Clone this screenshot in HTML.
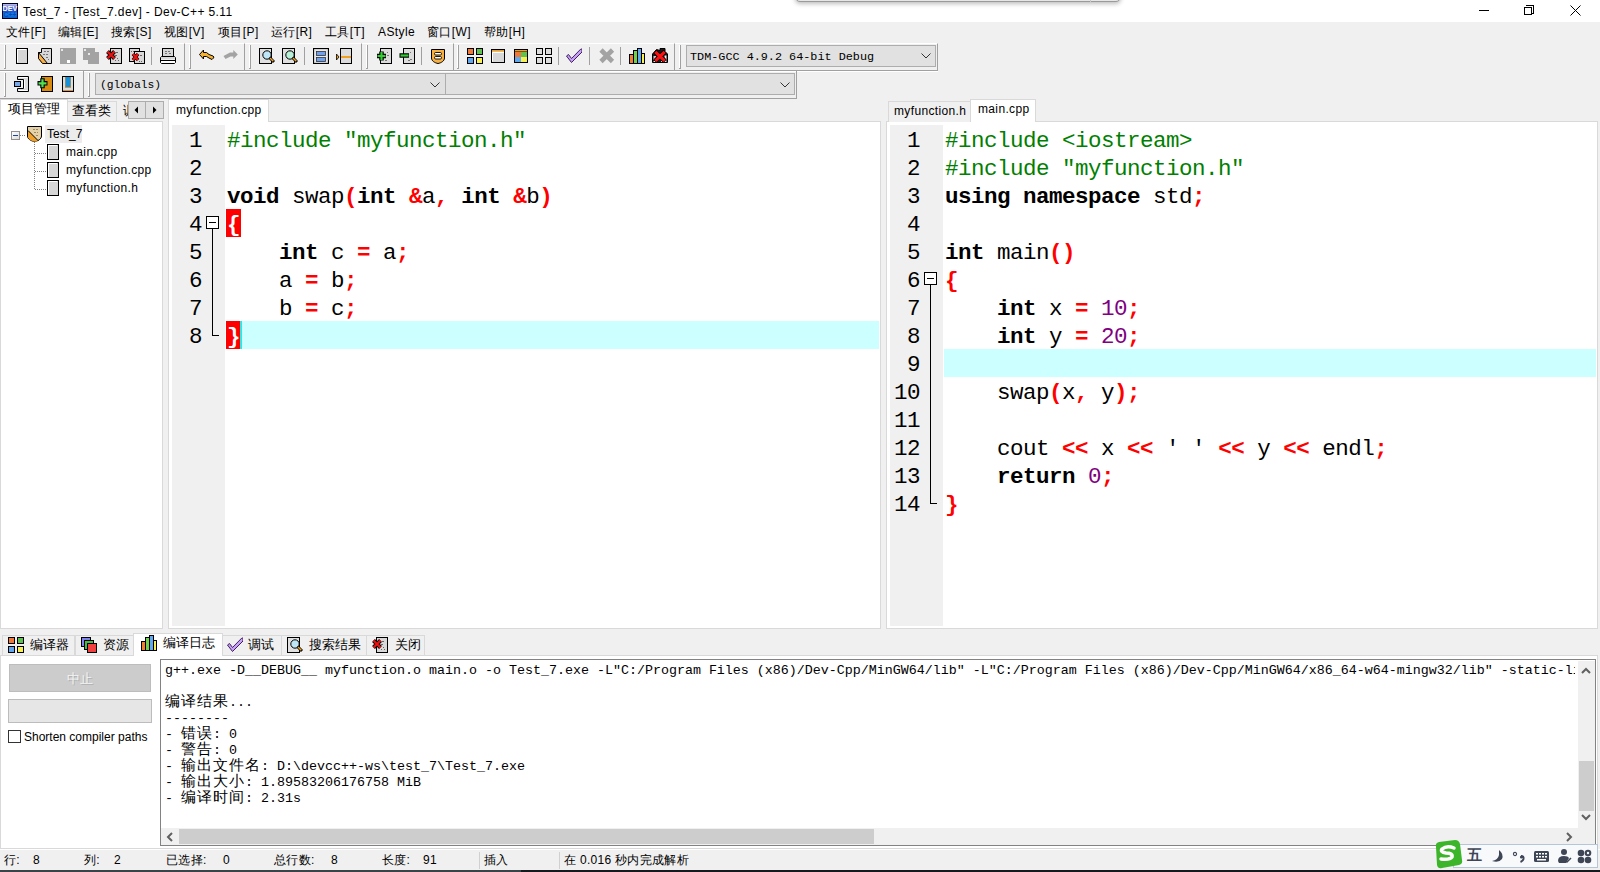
<!DOCTYPE html>
<html><head><meta charset="utf-8">
<style>
*{box-sizing:border-box}
html,body{margin:0;padding:0}
body{width:1600px;height:872px;position:relative;overflow:hidden;background:#f0f0f0;font-family:"Liberation Sans",sans-serif;font-size:12px;color:#000}
.a{position:absolute}
.t{position:absolute;white-space:pre;line-height:14px}
.code{position:absolute;font-family:"Liberation Mono",monospace;font-size:22.5px;letter-spacing:-0.5px;white-space:pre;line-height:28px}
.k{font-weight:bold}
.s{color:#ff0000;font-weight:bold}
.p{color:#008000}
.n{color:#800080}
.ln{position:absolute;font-family:"Liberation Mono",monospace;font-size:22.5px;letter-spacing:-0.5px;white-space:pre;line-height:28px;text-align:right}
.tb{position:absolute;top:43px;height:28px;border-top:1px solid #fff;border-bottom:1px solid #a0a0a0;border-right:1px solid #a0a0a0}
.hd{position:absolute;width:3px;border-left:1px solid #a0a0a0;border-right:1px solid #fff}
.sep{position:absolute;width:2px;height:18px;top:47px;border-left:1px solid #a0a0a0;border-right:1px solid #fff}
.ic{position:absolute;width:16px;height:16px}
.mono{font-family:"Liberation Mono",monospace}
.cj{letter-spacing:1px;font-size:15px}
</style></head><body>

<!-- title bar -->
<div class="a" style="left:0;top:0;width:1600px;height:22px;background:#fff"></div>
<div class="a" style="left:795px;top:-23px;width:326px;height:25px;background:#e6e6e6;border:1px solid #9a9a9a;border-radius:0 0 5px 5px;box-shadow:0 2px 4px rgba(0,0,0,.25)"></div><div class="a" style="left:1090px;top:0;width:1px;height:2px;background:#c8c8c8"></div>
<svg class="a" style="left:2px;top:3px" width="16" height="16" viewBox="0 0 16 16"><defs><linearGradient id="dg" x1="0" y1="0" x2="0" y2="1"><stop offset="0" stop-color="#c8c8f0"/><stop offset=".45" stop-color="#2040c0"/><stop offset=".7" stop-color="#1080f0"/><stop offset="1" stop-color="#0a5ac8"/></linearGradient></defs><rect x="0.5" y="0.5" width="15" height="15" fill="url(#dg)" stroke="#000020"/><text x="8" y="7.6" font-size="7.2" font-weight="bold" text-anchor="middle" fill="#fff" font-family="Liberation Sans">DEV</text><text x="8" y="14" font-size="7" font-weight="bold" text-anchor="middle" fill="#0a4cb0" font-family="Liberation Sans">C++</text></svg>
<div class="t" style="left:23px;top:5px;letter-spacing:0.4px">Test_7 - [Test_7.dev] - Dev-C++ 5.11</div>
<!-- window controls -->
<div class="a" style="left:1479px;top:10px;width:10px;height:1px;background:#000"></div>
<div class="a" style="left:1524px;top:7px;width:8px;height:8px;border:1px solid #000;background:#fff"></div>
<div class="a" style="left:1526px;top:5px;width:8px;height:8px;border-top:1px solid #000;border-right:1px solid #000"></div>
<div class="a" style="left:1531px;top:13px;width:3px;height:1px;background:#000"></div>
<svg class="a" style="left:1570px;top:5px" width="11" height="11"><path d="M0.5 0.5L10.5 10.5M10.5 0.5L0.5 10.5" stroke="#000" stroke-width="1"/></svg>

<!-- menu bar -->
<div class="t" style="left:6px;top:25px;letter-spacing:0.4px">文件[F]</div>
<div class="t" style="left:58px;top:25px;letter-spacing:0.4px">编辑[E]</div>
<div class="t" style="left:111px;top:25px;letter-spacing:0.4px">搜索[S]</div>
<div class="t" style="left:164px;top:25px;letter-spacing:0.4px">视图[V]</div>
<div class="t" style="left:218px;top:25px;letter-spacing:0.4px">项目[P]</div>
<div class="t" style="left:271px;top:25px;letter-spacing:0.4px">运行[R]</div>
<div class="t" style="left:325px;top:25px;letter-spacing:0.4px">工具[T]</div>
<div class="t" style="left:378px;top:25px;letter-spacing:0.4px">AStyle</div>
<div class="t" style="left:427px;top:25px;letter-spacing:0.4px">窗口[W]</div>
<div class="t" style="left:484px;top:25px;letter-spacing:0.4px">帮助[H]</div>

<!-- TOOLBARS -->
<div class="a" style="left:0;top:71px;width:938px;height:1px;background:#fff"></div>
<div class="a" style="left:0px;top:43px;width:185px;height:28px;border-top:1px solid #fff;border-bottom:1px solid #a0a0a0;border-right:1px solid #a0a0a0"></div>
<div class="a" style="left:185px;top:43px;width:60px;height:28px;border-top:1px solid #fff;border-bottom:1px solid #a0a0a0;border-right:1px solid #a0a0a0"></div>
<div class="a" style="left:245px;top:43px;width:117px;height:28px;border-top:1px solid #fff;border-bottom:1px solid #a0a0a0;border-right:1px solid #a0a0a0"></div>
<div class="a" style="left:362px;top:43px;width:92px;height:28px;border-top:1px solid #fff;border-bottom:1px solid #a0a0a0;border-right:1px solid #a0a0a0"></div>
<div class="a" style="left:454px;top:43px;width:221px;height:28px;border-top:1px solid #fff;border-bottom:1px solid #a0a0a0;border-right:1px solid #a0a0a0"></div>
<div class="a" style="left:675px;top:43px;width:263px;height:28px;border-top:1px solid #fff;border-bottom:1px solid #a0a0a0;border-right:1px solid #a0a0a0"></div>
<div class="a" style="left:4px;top:45px;width:1px;height:24px;background:#fff"></div><div class="a" style="left:5px;top:45px;width:1px;height:24px;background:#a0a0a0"></div><div class="a" style="left:4px;top:68px;width:1px;height:1px;background:#a0a0a0"></div>
<div class="a" style="left:189px;top:45px;width:1px;height:24px;background:#fff"></div><div class="a" style="left:190px;top:45px;width:1px;height:24px;background:#a0a0a0"></div><div class="a" style="left:189px;top:68px;width:1px;height:1px;background:#a0a0a0"></div>
<div class="a" style="left:249px;top:45px;width:1px;height:24px;background:#fff"></div><div class="a" style="left:250px;top:45px;width:1px;height:24px;background:#a0a0a0"></div><div class="a" style="left:249px;top:68px;width:1px;height:1px;background:#a0a0a0"></div>
<div class="a" style="left:366px;top:45px;width:1px;height:24px;background:#fff"></div><div class="a" style="left:367px;top:45px;width:1px;height:24px;background:#a0a0a0"></div><div class="a" style="left:366px;top:68px;width:1px;height:1px;background:#a0a0a0"></div>
<div class="a" style="left:457px;top:45px;width:1px;height:24px;background:#fff"></div><div class="a" style="left:458px;top:45px;width:1px;height:24px;background:#a0a0a0"></div><div class="a" style="left:457px;top:68px;width:1px;height:1px;background:#a0a0a0"></div>
<div class="a" style="left:679px;top:45px;width:1px;height:24px;background:#fff"></div><div class="a" style="left:680px;top:45px;width:1px;height:24px;background:#a0a0a0"></div><div class="a" style="left:679px;top:68px;width:1px;height:1px;background:#a0a0a0"></div>
<div class="a" style="left:151px;top:47px;width:1px;height:18px;background:#a0a0a0"></div>
<div class="a" style="left:304px;top:47px;width:1px;height:18px;background:#a0a0a0"></div>
<div class="a" style="left:421px;top:47px;width:1px;height:18px;background:#a0a0a0"></div>
<div class="a" style="left:558px;top:47px;width:1px;height:18px;background:#a0a0a0"></div>
<div class="a" style="left:589px;top:47px;width:1px;height:18px;background:#a0a0a0"></div>
<div class="a" style="left:620px;top:47px;width:1px;height:18px;background:#a0a0a0"></div>
<svg class="a" style="left:14px;top:48px" width="16" height="16" viewBox="0 0 16 16"><rect x="2.5" y="0.5" width="11" height="15" fill="#d6d6d6" stroke="#000"/><path d="M3.5 14.5V1.5H12" stroke="#fff" fill="none"/></svg>
<svg class="a" style="left:37px;top:48px" width="16" height="16" viewBox="0 0 16 16"><path d="M4.5 0.5H14.5V15.5H6.5L1.5 9.5V4.5H4.5Z" fill="#d8d8d8" stroke="#000"/><path d="M1.5 4.5L10.5 15.5H5.5L1.5 10.5Z" fill="#f8b040" stroke="#000"/><g fill="#777"><rect x="7" y="3" width="2" height="1"/><rect x="10" y="3" width="2" height="1"/><rect x="6" y="6" width="2" height="1"/><rect x="9" y="6" width="2" height="1"/><rect x="9" y="9" width="2" height="1"/><rect x="11" y="11" width="1" height="1"/></g></svg>
<svg class="a" style="left:60px;top:48px" width="16" height="16" viewBox="0 0 16 16"><rect x="0" y="0" width="16" height="16" fill="#a3a3a3"/><rect x="1" y="1" width="2" height="2" fill="#e8e8e8"/><rect x="7" y="12" width="3" height="3" fill="#fff"/></svg>
<svg class="a" style="left:83px;top:48px" width="16" height="16" viewBox="0 0 16 16"><path d="M0 0H12V4H16V16H5V12H0Z" fill="#a3a3a3"/><rect x="1" y="1" width="2" height="2" fill="#e8e8e8"/><rect x="5" y="5" width="2" height="2" fill="#e8e8e8"/></svg>
<svg class="a" style="left:106px;top:48px" width="16" height="16" viewBox="0 0 16 16"><rect x="4.5" y="0.5" width="11" height="15" fill="#d8d8d8" stroke="#000"/><g fill="#666"><rect x="10" y="4" width="2" height="1"/><rect x="9" y="7" width="2" height="1"/><rect x="11" y="10" width="1" height="1"/><rect x="9" y="12" width="1" height="1"/><rect x="12" y="12" width="1" height="1"/></g><path d="M1.5 3.5L8.5 10.5M8.5 3.5L1.5 10.5" stroke="#000" stroke-width="4"/><path d="M1.5 3.5L8.5 10.5M8.5 3.5L1.5 10.5" stroke="#f01010" stroke-width="2.2"/></svg>
<svg class="a" style="left:129px;top:48px" width="16" height="16" viewBox="0 0 16 16"><rect x="0.5" y="0.5" width="10" height="13" fill="#d8d8d8" stroke="#000"/><rect x="5.5" y="3.5" width="10" height="12" fill="#d8d8d8" stroke="#000"/><g fill="#666"><rect x="2" y="3" width="1" height="1"/><rect x="4" y="3" width="1" height="1"/><rect x="11" y="7" width="2" height="1"/><rect x="10" y="13" width="1" height="1"/><rect x="12" y="13" width="1" height="1"/></g><path d="M4 6L9 12M9 6L4 12" stroke="#000" stroke-width="3.5"/><path d="M4 6L9 12M9 6L4 12" stroke="#f01010" stroke-width="2"/></svg>
<svg class="a" style="left:160px;top:48px" width="16" height="16" viewBox="0 0 16 16"><rect x="2.5" y="0.5" width="11" height="9" fill="#d6d6d6" stroke="#000"/><g fill="#777"><rect x="5" y="3" width="2" height="1"/><rect x="8" y="3" width="2" height="1"/><rect x="5" y="5" width="2" height="1"/><rect x="9" y="5" width="2" height="1"/></g><path d="M1.5 8.5H14.5L15.5 9.5V14.5L14.5 15.5H1.5L0.5 14.5V9.5Z" fill="#fff" stroke="#000"/><rect x="1" y="9" width="14" height="2.5" fill="#d8d8d8"/><path d="M0.5 12.5H15.5" stroke="#000"/></svg>
<svg class="a" style="left:199px;top:48px" width="16" height="16" viewBox="0 0 16 16"><path d="M0.5 6.5L4.5 2V4.5H7.5L10 6.5L14 8Q15.5 9 14.5 10L13 11.5L10 10L7.5 8.5H4.5V11Z" fill="#f8b030" stroke="#000"/></svg>
<svg class="a" style="left:222px;top:48px" width="16" height="16" viewBox="0 0 16 16"><path d="M15.8 6.4L11.3 1.9V4.5H8L1.5 8L3.5 11L8.5 8.5H11.3V10.9Z" fill="#a3a3a3"/></svg>
<svg class="a" style="left:259px;top:48px" width="16" height="16" viewBox="0 0 16 16"><rect x="0.5" y="0.5" width="12" height="15" fill="#e0e0e0" stroke="#000"/><circle cx="8" cy="7" r="4.2" fill="#bfe6f6" stroke="#000"/><path d="M10.5 9.5L15 14" stroke="#000" stroke-width="3"/><path d="M11 10L14.3 13.3" stroke="#f0a020" stroke-width="1.5"/></svg>
<svg class="a" style="left:282px;top:48px" width="16" height="16" viewBox="0 0 16 16"><rect x="0.5" y="0.5" width="12" height="15" fill="#e0e0e0" stroke="#000"/><circle cx="8" cy="7" r="4.2" fill="#b8f0d8" stroke="#000"/><path d="M10.5 9.5L15 14" stroke="#000" stroke-width="3"/><path d="M11 10L14.3 13.3" stroke="#f0a020" stroke-width="1.5"/></svg>
<svg class="a" style="left:313px;top:48px" width="16" height="16" viewBox="0 0 16 16"><rect x="0.5" y="0.5" width="15" height="15" fill="#e8e8e8" stroke="#000" stroke-width="1.2"/><rect x="3.5" y="3.5" width="9" height="4" fill="#6ea0f0" stroke="#333" stroke-width=".8"/><rect x="3.5" y="9.5" width="9" height="4" fill="#6ea0f0" stroke="#333" stroke-width=".8"/></svg>
<svg class="a" style="left:336px;top:48px" width="16" height="16" viewBox="0 0 16 16"><rect x="4.5" y="0.5" width="11" height="15" fill="#dcdcdc" stroke="#000"/><rect x="5" y="8" width="10" height="2" fill="#f0a020"/><path d="M0.5 6L3 9L0.5 12Z" fill="#f0a020" stroke="#000" stroke-width=".8"/></svg>
<svg class="a" style="left:376px;top:48px" width="16" height="16" viewBox="0 0 16 16"><rect x="4.5" y="0.5" width="11" height="15" fill="#dcdcdc" stroke="#000"/><g fill="#777"><rect x="11" y="4" width="1" height="1"/><rect x="11" y="7" width="2" height="1"/><rect x="9" y="12" width="2" height="1"/></g><path d="M1 8H10M5.5 3.5V12.5" stroke="#000" stroke-width="4.5"/><path d="M1.5 8H9.5M5.5 4V12" stroke="#30d030" stroke-width="2.2"/></svg>
<svg class="a" style="left:399px;top:48px" width="16" height="16" viewBox="0 0 16 16"><rect x="4.5" y="0.5" width="11" height="15" fill="#dcdcdc" stroke="#000"/><g fill="#777"><rect x="11" y="4" width="1" height="1"/><rect x="11" y="11" width="2" height="1"/><rect x="9" y="12" width="2" height="1"/></g><path d="M0.5 7.5H10" stroke="#000" stroke-width="4.5"/><path d="M1.5 7.5H9.5" stroke="#30d030" stroke-width="2.2"/></svg>
<svg class="a" style="left:430px;top:48px" width="16" height="16" viewBox="0 0 16 16"><path d="M1.5 1.5H14.5V10C14.5 13 11 15 8 15.5C5 15 1.5 13 1.5 10Z" fill="#f8b040" stroke="#000"/><rect x="4.5" y="4.5" width="7" height="2.5" rx="1.2" fill="#fff" stroke="#000" stroke-width=".9"/><rect x="4.5" y="8.5" width="7" height="2.5" rx="1.2" fill="#fff" stroke="#000" stroke-width=".9"/></svg>
<svg class="a" style="left:467px;top:48px" width="16" height="16" viewBox="0 0 16 16"><rect x="0.5" y="0.5" width="6" height="6" fill="#f07838" stroke="#000"/><rect x="9.5" y="0.5" width="6" height="6" fill="#60c050" stroke="#000"/><rect x="0.5" y="9.5" width="6" height="6" fill="#60a8f0" stroke="#000"/><rect x="9.5" y="9.5" width="6" height="6" fill="#f8f050" stroke="#000"/></svg>
<svg class="a" style="left:490px;top:48px" width="16" height="16" viewBox="0 0 16 16"><rect x="1.5" y="1.5" width="13" height="13" fill="#d8d8d8" stroke="#000"/><rect x="2" y="2" width="12" height="1.5" fill="#f0a020"/><path d="M2.5 13.5V4.5H14" stroke="#fff" fill="none"/></svg>
<svg class="a" style="left:514px;top:48px" width="16" height="16" viewBox="0 0 16 16"><rect x="0.5" y="1.5" width="13" height="13" fill="#000" stroke="#000"/><rect x="1" y="2" width="12" height="1.5" fill="#f0a020"/><rect x="1" y="4" width="6" height="5" fill="#f07838"/><rect x="7" y="4" width="6" height="5" fill="#60c050"/><rect x="1" y="9" width="6" height="5" fill="#60a8f0"/><rect x="7" y="9" width="6" height="5" fill="#f8f050"/></svg>
<svg class="a" style="left:536px;top:48px" width="16" height="16" viewBox="0 0 16 16"><rect x="0.5" y="0.5" width="6" height="6" fill="#ddd" stroke="#000"/><rect x="9.5" y="0.5" width="6" height="6" fill="#ddd" stroke="#000"/><rect x="0.5" y="9.5" width="6" height="6" fill="#ddd" stroke="#000"/><rect x="9.5" y="9.5" width="6" height="6" fill="#ddd" stroke="#000"/></svg>
<svg class="a" style="left:566px;top:48px" width="16" height="16" viewBox="0 0 16 16"><path d="M0.5 8L5.5 14.5L16 4V1.5L15 0.8L5.5 10.5L2.5 6.5Z" fill="#c8a0f8" stroke="#402060"/></svg>
<svg class="a" style="left:599px;top:48px" width="16" height="16" viewBox="0 0 16 16"><path d="M2 2L13.5 13.5M13.5 2L2 13.5" stroke="#a3a3a3" stroke-width="4.6"/></svg>
<svg class="a" style="left:629px;top:48px" width="16" height="16" viewBox="0 0 16 16"><rect x="0.5" y="6.5" width="4" height="9" fill="#f08030" stroke="#000"/><rect x="4.5" y="2.5" width="4" height="13" fill="#70d050" stroke="#000"/><rect x="8.5" y="0.5" width="4" height="15" fill="#60a8f0" stroke="#000"/><rect x="12.5" y="5.5" width="3" height="10" fill="#f8f050" stroke="#000"/></svg>
<svg class="a" style="left:652px;top:48px" width="16" height="16" viewBox="0 0 16 16"><path d="M0.5 14.5V6L4.5 1.5L8 2.5V0.5H13V3.5L15.5 6V14.5Z" fill="#1a1a1a" stroke="#000"/><rect x="1.5" y="8" width="2.5" height="4" fill="#c8c8c8"/><rect x="12.5" y="7.5" width="2" height="5" fill="#eee"/><rect x="1.5" y="13" width="2" height="1" fill="#ddd"/><rect x="9" y="13" width="1.5" height="1" fill="#ddd"/><rect x="12.5" y="13" width="2" height="1" fill="#ddd"/><path d="M3 3.5L13 13.2M13 3.5L3 13.2" stroke="#000" stroke-width="4.6"/><path d="M3.3 3.8L12.7 12.9M12.7 3.8L3.3 12.9" stroke="#ff1010" stroke-width="3"/></svg>
<div class="a" style="left:686px;top:45px;width:250px;height:22px;background:#e1e1e1;border:1px solid #adadad"></div>
<div class="t mono" style="left:690px;top:50px;font-size:11.8px">TDM-GCC 4.9.2 64-bit Debug</div>
<svg class="a" style="left:921px;top:53px" width="10" height="6"><path d="M0.5 0.5L5 5L9.5 0.5" stroke="#333" fill="none"/></svg>
<div class="a" style="left:0px;top:71px;width:84px;height:28px;border-bottom:1px solid #a0a0a0;border-right:1px solid #a0a0a0"></div>
<div class="a" style="left:84px;top:71px;width:713px;height:28px;border-bottom:1px solid #a0a0a0;border-right:1px solid #a0a0a0"></div>
<div class="a" style="left:4px;top:73px;width:1px;height:24px;background:#fff"></div><div class="a" style="left:5px;top:73px;width:1px;height:24px;background:#a0a0a0"></div><div class="a" style="left:4px;top:96px;width:1px;height:1px;background:#a0a0a0"></div>
<div class="a" style="left:88px;top:73px;width:1px;height:24px;background:#fff"></div><div class="a" style="left:89px;top:73px;width:1px;height:24px;background:#a0a0a0"></div><div class="a" style="left:88px;top:96px;width:1px;height:1px;background:#a0a0a0"></div>
<svg class="a" style="left:14px;top:76px" width="16" height="16" viewBox="0 0 16 16"><path d="M3.5 0.5H14.5V15.5H3.5V12.5H9.5V3.5H3.5Z" fill="#dadada" stroke="#000"/><path d="M4.5 1.5H13.5M4.5 14.5H13.5M10.5 3.5V12.5" stroke="#fff"/><rect x="0.5" y="5.5" width="6" height="5" fill="#78a8e8" stroke="#000"/></svg>
<svg class="a" style="left:37px;top:76px" width="16" height="16" viewBox="0 0 16 16"><rect x="4.5" y="0.5" width="11" height="15" fill="#d88a10" stroke="#000"/><path d="M0.5 7.3H10.5M5.5 2.3V12.3" stroke="#000" stroke-width="4.5"/><path d="M1.5 7.3H9.5M5.5 3.3V11.3" stroke="#50e050" stroke-width="2.2"/></svg>
<svg class="a" style="left:62px;top:76px" width="16" height="16" viewBox="0 0 16 16"><rect x="0.5" y="0.5" width="11" height="15" fill="#e09030" stroke="#000"/><path d="M2 1V13H10V1" stroke="#dcdcdc" stroke-width="2" fill="none"/><rect x="3.5" y="1" width="5" height="10" fill="#1890d8"/></svg>
<div class="a" style="left:95px;top:73px;width:351px;height:22px;background:#e1e1e1;border:1px solid #adadad"></div>
<div class="a" style="left:445px;top:73px;width:350px;height:22px;background:#e1e1e1;border:1px solid #adadad"></div>
<div class="t mono" style="left:100px;top:78px;font-size:11.3px">(globals)</div>
<svg class="a" style="left:430px;top:82px" width="10" height="6"><path d="M0.5 0.5L5 5L9.5 0.5" stroke="#333" fill="none"/></svg>
<svg class="a" style="left:780px;top:82px" width="10" height="6"><path d="M0.5 0.5L5 5L9.5 0.5" stroke="#333" fill="none"/></svg>
<!-- left panel -->
<div class="a" style="left:0;top:121px;width:163px;height:508px;background:#fff;border:1px solid #d9d9d9"></div>
<div class="a" style="left:0;top:99px;width:68px;height:23px;background:#fff;border:1px solid #d9d9d9;border-bottom:none"></div>
<div class="t" style="left:8px;top:102px;font-size:13px">项目管理</div>
<div class="a" style="left:67px;top:101px;width:50px;height:20px;background:#f0f0f0;border:1px solid #d9d9d9;border-bottom:none"></div>
<div class="t" style="left:72px;top:104px;font-size:13px">查看类</div>
<div class="a" style="left:116px;top:101px;width:14px;height:20px;background:#f0f0f0;border-left:1px solid #d9d9d9;overflow:hidden"><div class="t" style="left:6px;top:3px;font-size:13px">调试</div></div>
<div class="a" style="left:128px;top:101px;width:18px;height:18px;background:#e1e1e1;border:1px solid #adadad"></div>
<div class="a" style="left:145px;top:101px;width:19px;height:18px;background:#e1e1e1;border:1px solid #adadad"></div>
<svg class="a" style="left:134px;top:106px" width="6" height="8"><path d="M4 0.5V7.5L0.5 4Z" fill="#000"/></svg>
<svg class="a" style="left:152px;top:106px" width="6" height="8"><path d="M1 0.5V7.5L4.5 4Z" fill="#000"/></svg>
<div class="a" style="left:11px;top:131px;width:9px;height:9px;border:1px solid #919191;background:linear-gradient(135deg,#fff,#dcdcdc)"></div>
<div class="a" style="left:13px;top:135px;width:5px;height:1px;background:#2040a0"></div>
<div class="a" style="left:20px;top:135px;width:6px;height:1px;background-image:linear-gradient(90deg,#808080 50%,transparent 50%);background-size:2px 1px"></div>
<div class="a" style="left:34px;top:142px;width:1px;height:48px;background-image:linear-gradient(180deg,#808080 50%,transparent 50%);background-size:1px 2px"></div>
<div class="a" style="left:35px;top:153px;width:11px;height:1px;background-image:linear-gradient(90deg,#808080 50%,transparent 50%);background-size:2px 1px"></div>
<div class="a" style="left:35px;top:171px;width:11px;height:1px;background-image:linear-gradient(90deg,#808080 50%,transparent 50%);background-size:2px 1px"></div>
<div class="a" style="left:35px;top:189px;width:11px;height:1px;background-image:linear-gradient(90deg,#808080 50%,transparent 50%);background-size:2px 1px"></div>
<svg class="a" style="left:26px;top:125px" width="17" height="17" viewBox="0 0 17 17"><path d="M1.5 1.5H15.5V11C15.5 14 12 16 8.5 16.5C5 16 1.5 14 1.5 11Z" fill="#e6d2a8" stroke="#000"/><path d="M2 5.5L12.5 16C11 16.4 9.5 16.5 8.5 16.5C5 16 2 14 2 11Z" fill="#f0a028"/><path d="M2 5.5L12.5 16" stroke="#000" stroke-width="1"/><g fill="#9a8866"><rect x="7" y="4" width="2" height="1"/><rect x="10" y="4" width="2" height="1"/><rect x="8" y="7" width="2" height="1"/><rect x="11" y="7" width="1" height="1"/><rect x="10" y="10" width="2" height="1"/></g></svg>
<div class="a" style="left:45px;top:125px;width:37px;height:18px;background:#ececec"></div>
<div class="t" style="left:47px;top:127px">Test_7</div>
<svg class="a" style="left:46px;top:144px" width="14" height="16" viewBox="0 0 14 16"><rect x="1.5" y="0.5" width="11" height="15" fill="#d6d6d6" stroke="#000"/><path d="M2.5 14.5V1.5H11" stroke="#fff" fill="none"/></svg>
<div class="t" style="left:66px;top:145px;letter-spacing:0.35px">main.cpp</div>
<svg class="a" style="left:46px;top:162px" width="14" height="16" viewBox="0 0 14 16"><rect x="1.5" y="0.5" width="11" height="15" fill="#d6d6d6" stroke="#000"/><path d="M2.5 14.5V1.5H11" stroke="#fff" fill="none"/></svg>
<div class="t" style="left:66px;top:163px;letter-spacing:0.35px">myfunction.cpp</div>
<svg class="a" style="left:46px;top:180px" width="14" height="16" viewBox="0 0 14 16"><rect x="1.5" y="0.5" width="11" height="15" fill="#d6d6d6" stroke="#000"/><path d="M2.5 14.5V1.5H11" stroke="#fff" fill="none"/></svg>
<div class="t" style="left:66px;top:181px;letter-spacing:0.35px">myfunction.h</div>

<!-- editors -->

<!-- left editor -->
<div class="a" style="left:168px;top:121px;width:713px;height:508px;background:#fff;border:1px solid #d9d9d9"></div>
<div class="a" style="left:168px;top:99px;width:101px;height:23px;background:#fff;border:1px solid #d9d9d9;border-bottom:none"></div>
<div class="t" style="left:176px;top:103px;letter-spacing:0.35px">myfunction.cpp</div>
<div class="a" style="left:172px;top:125px;width:53px;height:501px;background:#f0f0f0"></div>
<div class="a" style="left:226px;top:321px;width:653px;height:28px;background:#ccffff"></div>
<div class="a" style="left:226px;top:209px;width:15px;height:28px;background:#ff0000"></div>
<div class="a" style="left:226px;top:321px;width:14px;height:28px;background:#ff0000"></div>
<div class="a" style="left:240px;top:321px;width:2px;height:28px;background:#33e6e6"></div>
<div class="ln" style="left:172px;top:127px;width:30px">1
2
3
4
5
6
7
8</div>
<div class="a" style="left:206px;top:216px;width:13px;height:13px;border:1px solid #000;background:#fff"></div>
<div class="a" style="left:209px;top:222px;width:7px;height:1px;background:#000"></div>
<div class="a" style="left:212px;top:229px;width:1px;height:107px;background:#000"></div>
<div class="a" style="left:212px;top:335px;width:7px;height:1px;background:#000"></div>
<div class="code" style="left:227px;top:127px"><span class="p">#include "myfunction.h"</span>

<span class="k">void</span> swap<span class="s">(</span><span class="k">int</span> <span class="s">&amp;</span>a<span class="s">,</span> <span class="k">int</span> <span class="s">&amp;</span>b<span class="s">)</span>
<span class="s" style="color:#fff">{</span>
    <span class="k">int</span> c <span class="s">=</span> a<span class="s">;</span>
    a <span class="s">=</span> b<span class="s">;</span>
    b <span class="s">=</span> c<span class="s">;</span>
<span class="s" style="color:#fff">}</span></div>

<!-- right editor -->
<div class="a" style="left:886px;top:121px;width:712px;height:508px;background:#fff;border:1px solid #d9d9d9"></div>
<div class="a" style="left:888px;top:101px;width:83px;height:21px;background:#f0f0f0;border:1px solid #d9d9d9;border-bottom:none"></div>
<div class="t" style="left:894px;top:104px;letter-spacing:0.35px">myfunction.h</div>
<div class="a" style="left:970px;top:99px;width:66px;height:23px;background:#fff;border:1px solid #d9d9d9;border-bottom:none"></div>
<div class="t" style="left:978px;top:102px;letter-spacing:0.35px">main.cpp</div>
<div class="a" style="left:890px;top:125px;width:53px;height:501px;background:#f0f0f0"></div>
<div class="a" style="left:944px;top:349px;width:652px;height:28px;background:#ccffff"></div>
<div class="ln" style="left:890px;top:127px;width:30px">1
2
3
4
5
6
7
8
9
10
11
12
13
14</div>
<div class="a" style="left:924px;top:272px;width:13px;height:13px;border:1px solid #000;background:#fff"></div>
<div class="a" style="left:927px;top:278px;width:7px;height:1px;background:#000"></div>
<div class="a" style="left:930px;top:285px;width:1px;height:219px;background:#000"></div>
<div class="a" style="left:930px;top:503px;width:7px;height:1px;background:#000"></div>
<div class="code" style="left:945px;top:127px"><span class="p">#include &lt;iostream&gt;</span>
<span class="p">#include "myfunction.h"</span>
<span class="k">using</span> <span class="k">namespace</span> std<span class="s">;</span>

<span class="k">int</span> main<span class="s">()</span>
<span class="s">{</span>
    <span class="k">int</span> x <span class="s">=</span> <span class="n">10</span><span class="s">;</span>
    <span class="k">int</span> y <span class="s">=</span> <span class="n">20</span><span class="s">;</span>

    swap<span class="s">(</span>x<span class="s">,</span> y<span class="s">);</span>

    cout <span class="s">&lt;&lt;</span> x <span class="s">&lt;&lt;</span> <span class="p" style="color:#000">' '</span> <span class="s">&lt;&lt;</span> y <span class="s">&lt;&lt;</span> endl<span class="s">;</span>
    <span class="k">return</span> <span class="n">0</span><span class="s">;</span>
<span class="s">}</span></div>


<!-- bottom panel -->
<div class="a" style="left:0;top:655px;width:1598px;height:194px;background:#fff;border:1px solid #d9d9d9"></div>
<div class="a" style="left:2px;top:635px;width:73px;height:20px;background:#f0f0f0;border:1px solid #d9d9d9;border-bottom:none"></div>
<div class="t" style="left:30px;top:638px;font-size:13px">编译器</div>
<div class="a" style="left:75px;top:635px;width:59px;height:20px;background:#f0f0f0;border:1px solid #d9d9d9;border-bottom:none"></div>
<div class="t" style="left:103px;top:638px;font-size:13px">资源</div>
<div class="a" style="left:222px;top:635px;width:60px;height:20px;background:#f0f0f0;border:1px solid #d9d9d9;border-bottom:none"></div>
<div class="t" style="left:248px;top:638px;font-size:13px">调试</div>
<div class="a" style="left:281px;top:635px;width:86px;height:20px;background:#f0f0f0;border:1px solid #d9d9d9;border-bottom:none"></div>
<div class="t" style="left:309px;top:638px;font-size:13px">搜索结果</div>
<div class="a" style="left:366px;top:635px;width:59px;height:20px;background:#f0f0f0;border:1px solid #d9d9d9;border-bottom:none"></div>
<div class="t" style="left:395px;top:638px;font-size:13px">关闭</div>
<div class="a" style="left:133px;top:633px;width:90px;height:23px;background:#fff;border:1px solid #d9d9d9;border-bottom:none"></div>
<div class="t" style="left:163px;top:636px;font-size:13px">编译日志</div>
<svg class="a" style="left:8px;top:637px" width="16" height="16" viewBox="0 0 16 16"><rect x="0.5" y="0.5" width="6" height="6" fill="#f07838" stroke="#000"/><rect x="9.5" y="0.5" width="6" height="6" fill="#60c050" stroke="#000"/><rect x="0.5" y="9.5" width="6" height="6" fill="#60a8f0" stroke="#000"/><rect x="9.5" y="9.5" width="6" height="6" fill="#f8f050" stroke="#000"/></svg>
<svg class="a" style="left:81px;top:637px" width="16" height="16" viewBox="0 0 16 16"><rect x="0.5" y="0.5" width="9" height="9" fill="#8080f0" stroke="#000"/><rect x="3.5" y="3.5" width="9" height="9" fill="#40c040" stroke="#000"/><rect x="6.5" y="6.5" width="9" height="9" fill="#f04040" stroke="#000"/></svg>
<svg class="a" style="left:141px;top:635px" width="16" height="16" viewBox="0 0 16 16"><rect x="0.5" y="6.5" width="4" height="9" fill="#f08030" stroke="#000"/><rect x="4.5" y="2.5" width="4" height="13" fill="#70d050" stroke="#000"/><rect x="8.5" y="0.5" width="4" height="15" fill="#60a8f0" stroke="#000"/><rect x="12.5" y="5.5" width="3" height="10" fill="#f8f050" stroke="#000"/></svg>
<svg class="a" style="left:227px;top:637px" width="16" height="16" viewBox="0 0 16 16"><path d="M0.5 8L5.5 14.5L16 4V1.5L15 0.8L5.5 10.5L2.5 6.5Z" fill="#c8a0f8" stroke="#402060"/></svg>
<svg class="a" style="left:287px;top:637px" width="16" height="16" viewBox="0 0 16 16"><rect x="0.5" y="0.5" width="12" height="15" fill="#e0e0e0" stroke="#000"/><circle cx="8" cy="7" r="4.2" fill="#bfe6f6" stroke="#000"/><path d="M10.5 9.5L15 14" stroke="#000" stroke-width="3"/><path d="M11 10L14.3 13.3" stroke="#f0a020" stroke-width="1.5"/></svg>
<svg class="a" style="left:372px;top:637px" width="16" height="16" viewBox="0 0 16 16"><rect x="4.5" y="0.5" width="11" height="15" fill="#d8d8d8" stroke="#000"/><g fill="#666"><rect x="10" y="4" width="2" height="1"/><rect x="9" y="7" width="2" height="1"/><rect x="11" y="10" width="1" height="1"/><rect x="9" y="12" width="1" height="1"/><rect x="12" y="12" width="1" height="1"/></g><path d="M1.5 3.5L8.5 10.5M8.5 3.5L1.5 10.5" stroke="#000" stroke-width="4"/><path d="M1.5 3.5L8.5 10.5M8.5 3.5L1.5 10.5" stroke="#f01010" stroke-width="2.2"/></svg>
<div class="a" style="left:9px;top:664px;width:142px;height:28px;background:#cccccc;border:1px solid #bdbdbd"></div>
<div class="t" style="left:67px;top:672px;font-size:13px;color:#f4f4f4;text-shadow:1px 1px 0 #b0b0b0">中止</div>
<div class="a" style="left:8px;top:699px;width:144px;height:24px;background:#e6e6e6;border:1px solid #bcbcbc"></div>
<div class="a" style="left:8px;top:730px;width:13px;height:13px;background:#fff;border:1px solid #333"></div>
<div class="t" style="left:24px;top:730px">Shorten compiler paths</div>
<div class="a" style="left:160px;top:659px;width:1436px;height:187px;background:#fff;border:1px solid #828282"></div>
<div class="a" style="left:161px;top:660px;width:1414px;height:168px;overflow:hidden">
<div class="a mono" style="left:4px;top:3px;font-size:13.33px;line-height:16px;white-space:pre">g++.exe -D__DEBUG__ myfunction.o main.o -o Test_7.exe -L"C:/Program Files (x86)/Dev-Cpp/MinGW64/lib" -L"C:/Program Files (x86)/Dev-Cpp/MinGW64/x86_64-w64-mingw32/lib" -static-libgcc

<span class="cj">编译结果</span>...
--------
- <span class="cj">错误</span>: 0
- <span class="cj">警告</span>: 0
- <span class="cj">输出文件名</span>: D:\devcc++-ws\test_7\Test_7.exe
- <span class="cj">输出大小</span>: 1.89583206176758 MiB
- <span class="cj">编译时间</span>: 2.31s</div>
</div>
<div class="a" style="left:1578px;top:661px;width:17px;height:167px;background:#f0f0f0"></div>
<div class="a" style="left:1579px;top:761px;width:15px;height:50px;background:#cdcdcd"></div>
<svg class="a" style="left:1581px;top:666px" width="10" height="8"><path d="M1 7L5 3L9 7" stroke="#606060" stroke-width="2" fill="none"/></svg>
<svg class="a" style="left:1581px;top:814px" width="10" height="8"><path d="M1 1L5 5L9 1" stroke="#606060" stroke-width="2" fill="none"/></svg>
<div class="a" style="left:161px;top:828px;width:1434px;height:17px;background:#f0f0f0"></div>
<div class="a" style="left:179px;top:829px;width:695px;height:15px;background:#cdcdcd"></div>
<svg class="a" style="left:166px;top:832px" width="8" height="10"><path d="M6 1L2 5L6 9" stroke="#606060" stroke-width="2" fill="none"/></svg>
<svg class="a" style="left:1565px;top:832px" width="8" height="10"><path d="M2 1L6 5L2 9" stroke="#606060" stroke-width="2" fill="none"/></svg>
<div class="a" style="left:0;top:849px;width:1600px;height:1px;background:#fff"></div>
<div class="t" style="left:4px;top:853px;letter-spacing:0.3px">行:</div>
<div class="t" style="left:33px;top:853px;letter-spacing:0.3px">8</div>
<div class="t" style="left:84px;top:853px;letter-spacing:0.3px">列:</div>
<div class="t" style="left:114px;top:853px;letter-spacing:0.3px">2</div>
<div class="t" style="left:166px;top:853px;letter-spacing:0.3px">已选择:</div>
<div class="t" style="left:223px;top:853px;letter-spacing:0.3px">0</div>
<div class="t" style="left:274px;top:853px;letter-spacing:0.3px">总行数:</div>
<div class="t" style="left:331px;top:853px;letter-spacing:0.3px">8</div>
<div class="t" style="left:382px;top:853px;letter-spacing:0.3px">长度:</div>
<div class="t" style="left:423px;top:853px;letter-spacing:0.3px">91</div>
<div class="t" style="left:484px;top:853px;letter-spacing:0.3px">插入</div>
<div class="t" style="left:564px;top:853px;letter-spacing:0.3px">在 0.016 秒内完成解析</div>
<div class="a" style="left:479px;top:852px;width:1px;height:17px;background:#d0d0d0"></div>
<div class="a" style="left:559px;top:852px;width:1px;height:17px;background:#d0d0d0"></div>
<div class="a" style="left:0;top:870px;width:521px;height:2px;background:#3a4347"></div>
<div class="a" style="left:521px;top:870px;width:1079px;height:2px;background:#161a1e"></div>
<div class="a" style="left:1453px;top:844px;width:145px;height:24px;background:#f7f9fb;border:1px solid #b6c6d6"></div>
<svg class="a" style="left:1433px;top:840px" width="30" height="29" viewBox="0 0 30 29"><path d="M3 7Q2 3 6 2L22 0Q26 0 27 4L29 20Q30 24 26 25L9 28Q5 29 4 25Z" fill="#3db52b"/><path d="M21 8Q14 5 9 9Q7 12 13 13Q20 13 19 17Q17 20 8 19" stroke="#fff" stroke-width="3.5" fill="none" stroke-linecap="round"/></svg>
<div class="t" style="left:1467px;top:848px;font-size:15px;font-weight:bold;color:#3e4656">五</div>
<svg class="a" style="left:1490px;top:849px" width="15" height="14"><path d="M9 1Q14 5 12 10Q9 14 2 12Q8 11 9 6Q9 3 9 1Z" fill="#3e4656"/></svg>
<svg class="a" style="left:1512px;top:851px" width="14" height="12"><circle cx="3" cy="3" r="1.6" stroke="#3e4656" stroke-width="1.1" fill="none"/><path d="M9 5Q12 5 11.5 8Q11 10 8.5 11" stroke="#3e4656" stroke-width="2" fill="none"/><circle cx="9.5" cy="6" r="1.6" fill="#3e4656"/></svg>
<svg class="a" style="left:1533px;top:850px" width="17" height="13"><rect x="1" y="1" width="15" height="11" rx="1.5" fill="#3e4656"/><g fill="#fff"><rect x="3" y="3" width="2" height="1.5"/><rect x="6" y="3" width="2" height="1.5"/><rect x="9" y="3" width="2" height="1.5"/><rect x="12" y="3" width="2" height="1.5"/><rect x="3" y="6" width="2" height="1.5"/><rect x="6" y="6" width="2" height="1.5"/><rect x="9" y="6" width="2" height="1.5"/><rect x="12" y="6" width="2" height="1.5"/><rect x="4" y="9" width="9" height="1.5"/></g></svg>
<svg class="a" style="left:1557px;top:848px" width="16" height="16"><circle cx="7" cy="4" r="3" fill="#3e4656"/><path d="M1 13Q1 8 7 8Q11 8 12 10L9 15H2Z" fill="#3e4656"/><path d="M8 12L10 14L14 10" stroke="#3e4656" stroke-width="1.5" fill="none"/></svg>
<svg class="a" style="left:1577px;top:849px" width="15" height="15"><circle cx="4" cy="4" r="3.3" fill="#3e4656"/><circle cx="11" cy="4" r="3.3" fill="#3e4656"/><circle cx="4" cy="11" r="3.3" fill="#3e4656"/><circle cx="11" cy="11" r="3.3" fill="#3e4656"/><circle cx="11" cy="4" r="1.2" fill="#f7f9fb"/></svg>

<!-- status bar -->


</body></html>
